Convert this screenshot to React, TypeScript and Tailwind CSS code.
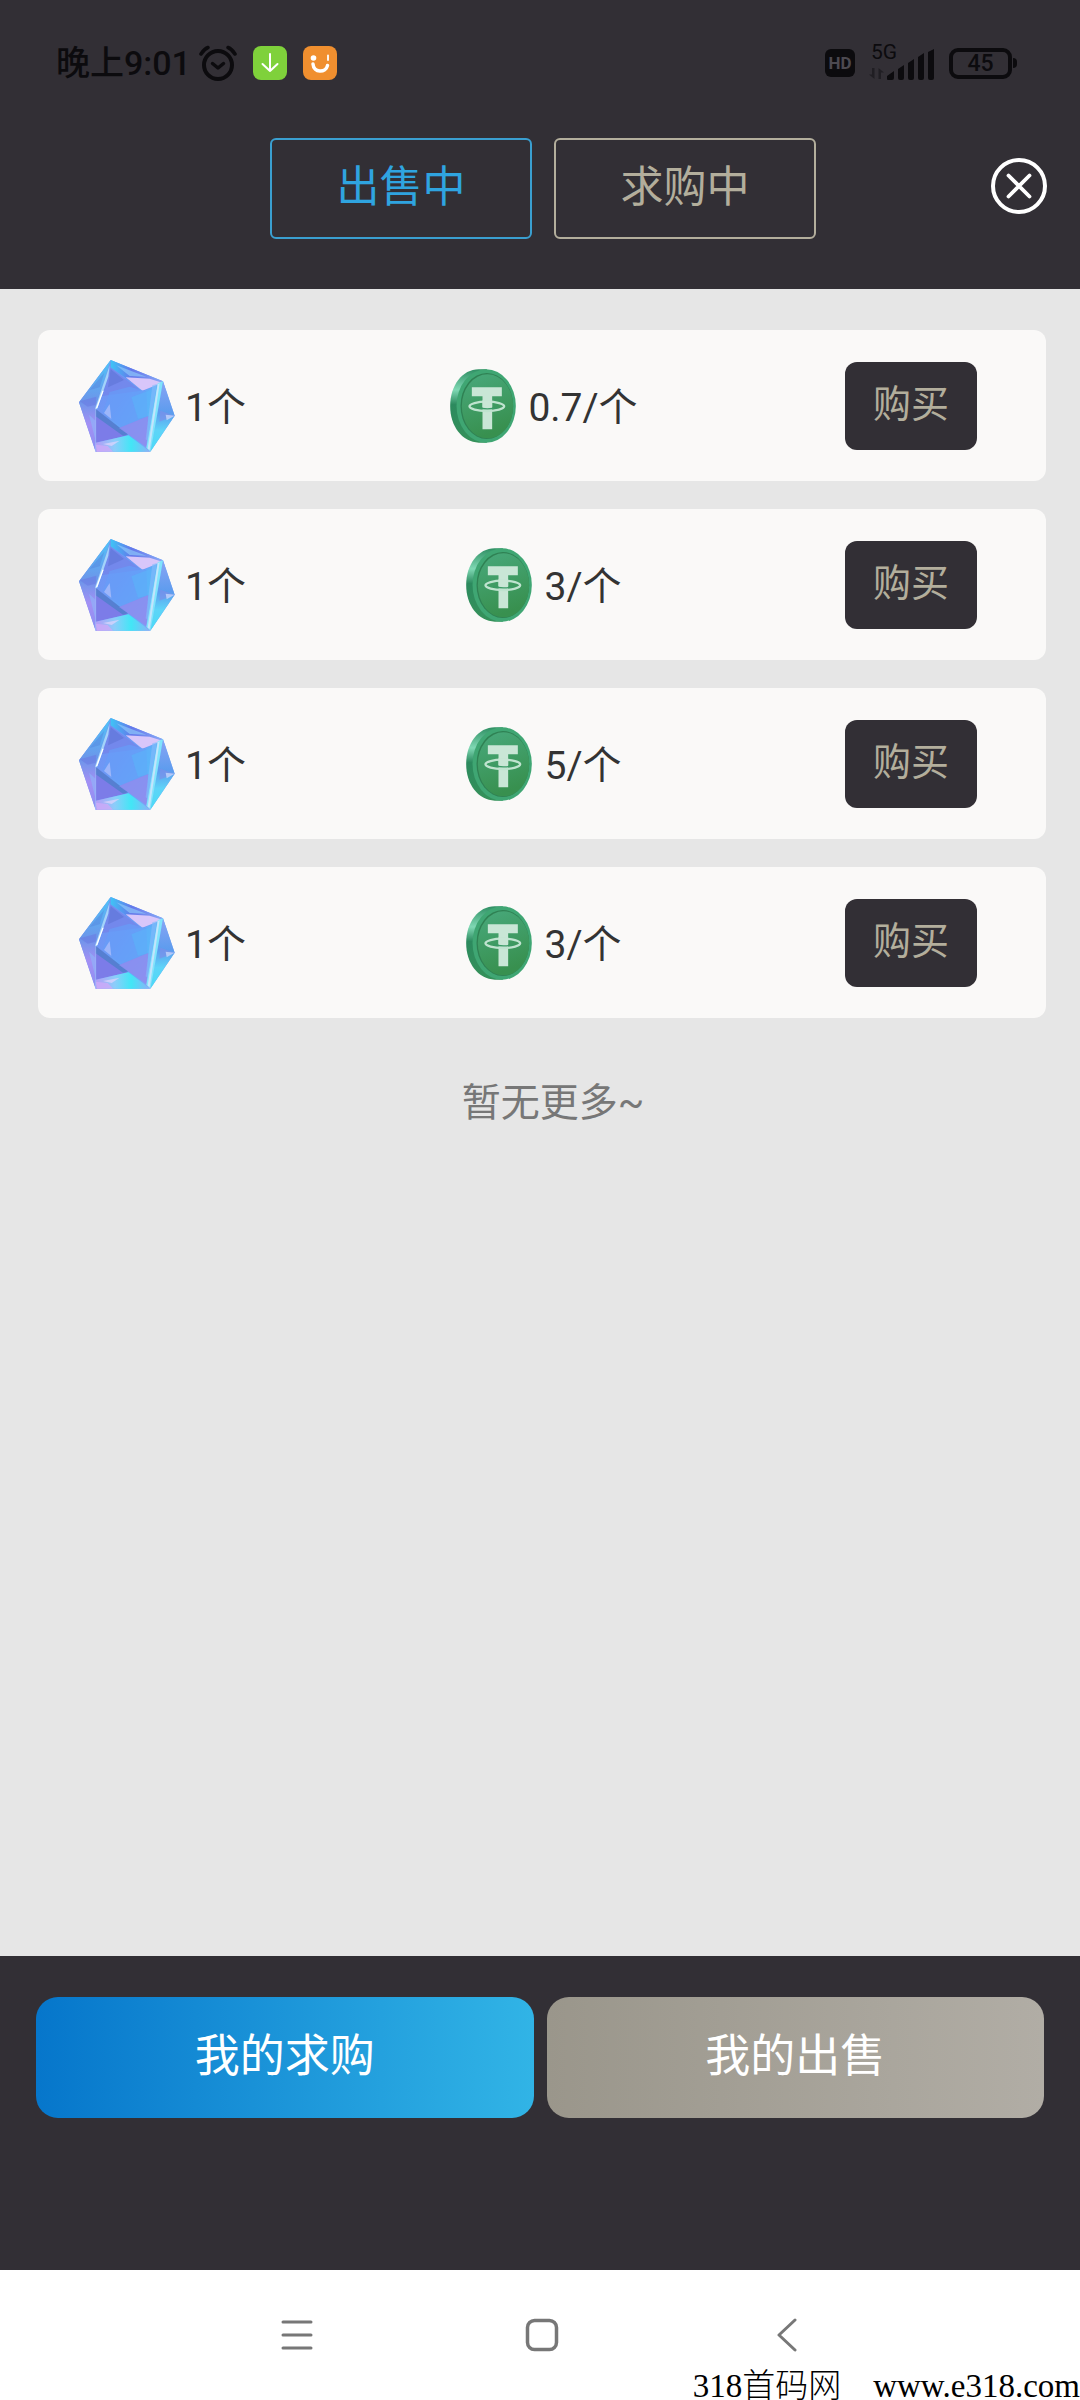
import React, { useState } from 'react';
import clsx from 'clsx';

const orders = [
    { id: 1, amount: 1, price: '0.7' },
    { id: 2, amount: 1, price: '3' },
    { id: 3, amount: 1, price: '5' },
    { id: 4, amount: 1, price: '3' },
];

const AlarmIcon = () => (
    <svg width="38" height="36" viewBox="0 0 38 36" fill="none" stroke="currentColor" strokeLinecap="round" aria-hidden="true">
        <circle cx="19" cy="20" r="14" strokeWidth="4" />
        <path d="M13.500 18.500L19 23l5.500-4.500" strokeWidth="3.500" strokeLinejoin="round" />
        <path d="M2 9Q5 4 9 2.500M36 9Q33 4 29 2.500" strokeWidth="3.500" />
    </svg>
);

const DownloadBadge = () => (
    <svg width="34" height="34" viewBox="0 0 34 34" fill="none" aria-hidden="true">
        <rect width="34" height="34" rx="8" fill="#7fd13b" />
        <path d="M17 8v17M9.500 18l7.500 7 7.500-7" stroke="#fff" strokeWidth="2" strokeLinecap="round" strokeLinejoin="round" />
    </svg>
);

const SmileBadge = () => (
    <svg width="34" height="34" viewBox="0 0 34 34" fill="none" aria-hidden="true">
        <rect width="34" height="34" rx="8" fill="#f08f2f" />
        <circle cx="10.500" cy="12" r="2.800" fill="#fff" />
        <path d="M25 9.500v4.500" stroke="#fff" strokeWidth="1.800" strokeLinecap="round" />
        <path d="M10 18c.5 9 13 9 14.500 1.500" stroke="#fff" strokeWidth="3.500" strokeLinecap="round" />
    </svg>
);

const SignalIcon = () => (
    <svg width="66" height="34" viewBox="0 0 66 34" fill="currentColor" aria-hidden="true">
        <path d="M5.500 22v11L0 28.500h3V22zM9.500 33V22l5.500 4.500h-3V33z" opacity="0.450" />
        <path d="M18 30l7-5v7a2 2 0 0 1-2 2h-4a1 1 0 0 1-1-1zM29 23l6-4v13a2 2 0 0 1-2 2h-2a2 2 0 0 1-2-2zM39 17l6-4v19a2 2 0 0 1-2 2h-2a2 2 0 0 1-2-2zM49 11l6-4v25a2 2 0 0 1-2 2h-2a2 2 0 0 1-2-2zM59 6l6-3v29a2 2 0 0 1-2 2h-2a2 2 0 0 1-2-2z" />
    </svg>
);

const CloseIcon = () => (
    <svg width="56" height="56" viewBox="0 0 56 56" fill="none" stroke="currentColor" strokeLinecap="round" aria-hidden="true">
        <circle cx="28" cy="28" r="26" strokeWidth="4" />
        <path d="M17.500 17.500l21 21M38.500 17.500l-21 21" strokeWidth="3.800" />
    </svg>
);

const GemIcon = () => (
    <svg width="96" height="92" viewBox="28 28 288 276" className="shrink-0" aria-hidden="true">
        <defs>
            <linearGradient id="gem-core" x1="0" y1="0" x2="1" y2="0.600">
                <stop offset="0" stopColor="#7a8cf0" />
                <stop offset="0.500" stopColor="#6c9af6" />
                <stop offset="0.800" stopColor="#5cb4fa" />
                <stop offset="1" stopColor="#8a9cf4" />
            </linearGradient>
            <linearGradient id="gem-left" x1="0" y1="0" x2="0" y2="1">
                <stop offset="0" stopColor="#4fc4f8" />
                <stop offset="0.450" stopColor="#6c96ea" />
                <stop offset="0.700" stopColor="#a490f4" />
                <stop offset="1" stopColor="#8a90f2" />
            </linearGradient>
            <linearGradient id="gem-right" x1="0" y1="0" x2="0" y2="1">
                <stop offset="0" stopColor="#8aa4f4" />
                <stop offset="0.450" stopColor="#5c9cee" />
                <stop offset="0.700" stopColor="#5ed4f8" />
                <stop offset="1" stopColor="#48dcf6" />
            </linearGradient>
            <linearGradient id="gem-bottom" x1="0" y1="0" x2="1" y2="0">
                <stop offset="0" stopColor="#b49cf6" />
                <stop offset="0.350" stopColor="#8ccdfa" />
                <stop offset="0.650" stopColor="#42e6f6" />
                <stop offset="1" stopColor="#8fb0f6" />
            </linearGradient>
            <linearGradient id="gem-top" x1="0" y1="0" x2="1" y2="0">
                <stop offset="0" stopColor="#3fc4f6" />
                <stop offset="0.400" stopColor="#6478ea" />
                <stop offset="1" stopColor="#8aa8f6" />
            </linearGradient>
        </defs>
        <path d="M123 28L280 92 315 195 242 303H78L28 155z" fill="url(#gem-core)" />
        <path d="M123 28L78 175 78 303 28 155z" fill="url(#gem-left)" />
        <path d="M30 152l50-14-2 24-24 6z" fill="#6a7ce2" opacity="0.600" />
        <path d="M60 118l44-52-14 44z" fill="#5588e0" opacity="0.500" />
        <path d="M58 192l20 18v60z" fill="#8cb8fa" opacity="0.600" />
        <path d="M123 28L280 92 222 120 123 50z" fill="url(#gem-top)" />
        <path d="M140 44l90 34-50-2z" fill="#8cc4fa" opacity="0.700" />
        <path d="M168 80l72 4 38 12-60 24z" fill="#d8c6fa" />
        <path d="M123 52l92 68-118 16z" fill="#7484ea" opacity="0.800" />
        <path d="M123 56l40 32-48 22z" fill="#5a70d2" opacity="0.500" />
        <path d="M120 124l60-16 50 14 4 76-78 34-56-48z" fill="#669cf8" opacity="0.700" />
        <path d="M185 140l62-24-6 80-36 8z" fill="#58b8fa" opacity="0.500" />
        <path d="M120 160l5 45-22-18z" fill="#b4c2fb" opacity="0.700" />
        <path d="M78 175L176 254 78 276z" fill="#7c7ce8" />
        <path d="M78 175l98 76-16 4-82-58z" fill="#4c80ca" opacity="0.800" />
        <path d="M148 232l88-36-6 94z" fill="#9488ee" opacity="0.800" />
        <path d="M78 276l98-22 66 49H78z" fill="url(#gem-bottom)" />
        <path d="M78 282l36 4 16 17H82z" fill="#cdaaf8" opacity="0.800" />
        <path d="M100 280l50-10-24 16z" fill="#e2d4fc" opacity="0.700" />
        <path d="M280 92L315 195 242 303z" fill="url(#gem-right)" />
        <path d="M272 180l43 15-46 18z" fill="#7c90ea" opacity="0.700" />
        <path d="M288 192l27 3-24 14z" fill="#c4d4fb" opacity="0.800" />
        <path d="M264 98l16-6-30 170-8 41-12-12z" fill="#80e4fb" />
        <path d="M264 100l6-2-30 200-6-4z" fill="#d4e4fd" opacity="0.800" />
        <path d="M248 104l14-4-28 170-6-4z" fill="#84bcfa" opacity="0.600" />
        <path d="M120 44l-4 34-34 98-6-2z" fill="#a8dafb" opacity="0.900" />
        <path d="M98 120l4 0-18 50-6 4z" fill="#fff" />
        <path d="M78 175v128" stroke="#a4c0fa" strokeWidth="2" />
    </svg>
);

const TetherIcon = () => (
    <svg width="66" height="74" viewBox="30 56 197 222" className="shrink-0" aria-hidden="true">
        <defs>
            <linearGradient id="coin-edge" x1="0" y1="0" x2="0" y2="1">
                <stop offset="0" stopColor="#2f8f63" />
                <stop offset="0.280" stopColor="#7fd8b4" />
                <stop offset="0.480" stopColor="#2c8a5e" />
                <stop offset="1" stopColor="#35915a" />
            </linearGradient>
            <linearGradient id="coin-face" x1="0" y1="0" x2="0.300" y2="1">
                <stop offset="0" stopColor="#48a97c" />
                <stop offset="1" stopColor="#38904f" />
            </linearGradient>
        </defs>
        <path d="M140 57h-24C66 57 30 106 30 167s36 108 86 110h24z" fill="url(#coin-edge)" />
        <ellipse cx="138" cy="167" rx="89" ry="110" fill="#3fa673" />
        <ellipse cx="140" cy="167" rx="79" ry="99" fill="#2f8153" />
        <ellipse cx="142" cy="168" rx="77" ry="96" fill="url(#coin-face)" />
        <path d="M95 111h90v27h-29v99h-29v-99H95z" fill="#c9e6d6" />
        <ellipse cx="140" cy="168" rx="52" ry="14" fill="none" stroke="#bfe3cf" strokeWidth="7" />
        <path d="M127 150h29v20h-29z" fill="#c9e6d6" />
        <path d="M112 172q29 7 60 0" fill="none" stroke="#3a9a66" strokeWidth="4" />
    </svg>
);

const StatusBar = () => (
    <div className="flex h-[126px] items-center justify-between pl-14 pr-[63px] text-[#0c0b0e]">
        <div className="flex items-center">
            <span className="mr-2 text-[34px] leading-10 font-medium">晚上9:01</span>
            <AlarmIcon />
            <div className="ml-4 flex gap-4">
                <DownloadBadge />
                <SmileBadge />
            </div>
        </div>
        <div className="flex items-center">
            <span className="mr-3.5 flex h-7 w-[30px] items-center justify-center rounded-md bg-[#0c0b0e] text-[17px] leading-none font-bold text-[#4c4950]">
                HD
            </span>
            <div className="relative mr-3.5">
                <SignalIcon />
                <span className="absolute -top-1.5 left-0.5 text-[21px] leading-6">5G</span>
            </div>
            <div className="flex h-[31px] w-[63px] items-center justify-center rounded-[9px] border-4 border-[#0c0b0e] text-[23px] leading-none font-medium">
                45
            </div>
            <span className="ml-px h-2.5 w-1 rounded-r-md bg-[#0c0b0e]" />
        </div>
    </div>
);

const OrderCard = ({ amount, price }: { amount: number; price: string }) => (
    <li className="grid h-[151px] grid-cols-3 items-center rounded-xl bg-[#faf9f8] text-[39px] leading-none text-[#333]">
        <div className="flex items-center gap-2.5 pl-[41px]">
            <GemIcon />
            <span className="pt-1.5">{amount}个</span>
        </div>
        <div className="flex items-center justify-center gap-3 pl-1">
            <TetherIcon />
            <span className="pt-1.5">{price}/个</span>
        </div>
        <div className="flex justify-end pr-[69px]">
            <button className="h-[88px] w-[132px] rounded-xl bg-[#322f35] pb-1 text-[38px] leading-none text-[#b3ae9c]">
                购买
            </button>
        </div>
    </li>
);

const tabs = ['出售中', '求购中'];

const App = () => {
    const [tab, setTab] = useState('出售中');

    return (
        <div className="flex min-h-screen flex-col bg-[#e6e6e6] font-['Roboto','Noto_Sans_CJK_SC',sans-serif]">
            <header className="bg-[#322f35]">
                <StatusBar />
                <div className="grid grid-cols-[1fr_auto_1fr] items-center pt-3 pb-[50px] pl-1.5">
                    <div className="col-start-2 flex gap-[22px]">
                        {tabs.map((name) => (
                            <button
                                key={name}
                                onClick={() => setTab(name)}
                                className={clsx(
                                    'h-[101px] w-[262px] rounded-md border-2 pb-0.5 text-[43px] leading-none',
                                    tab === name ? 'border-[#3a9fd0] text-[#2fa4e0]' : 'border-[#b3ae9c] text-[#b3ae9c]'
                                )}
                            >
                                {name}
                            </button>
                        ))}
                    </div>
                    <button aria-label="关闭" className="mr-[33px] mb-1.5 justify-self-end text-white">
                        <CloseIcon />
                    </button>
                </div>
            </header>

            <main className="flex-1 pt-[41px] pr-[34px] pl-[38px]">
                <ul className="flex flex-col gap-7">
                    {orders.map((order) => (
                        <OrderCard key={order.id} amount={order.amount} price={order.price} />
                    ))}
                </ul>
                <p className="mt-[60px] pl-[22px] text-center text-[39px] leading-[50px] text-[#777]">暂无更多~</p>
            </main>

            <footer>
                <div className="flex gap-[13px] bg-[#322f35] px-9 pt-[41px] pb-[152px] text-[45px] leading-none text-white">
                    <button className="h-[121px] flex-1 rounded-[22px] bg-linear-to-r from-[#0676cb] to-[#31b4e6] pb-0.5">
                        我的求购
                    </button>
                    <button className="h-[121px] flex-1 rounded-[22px] bg-linear-to-r from-[#9a968b] to-[#b1ada5] pb-0.5">
                        我的出售
                    </button>
                </div>
                <div className="relative h-[130px] bg-white text-[#777]">
                    <nav className="flex h-full items-center justify-center gap-[212px] pl-1">
                        <button aria-label="菜单">
                            <svg width="32" height="34" viewBox="0 0 32 34" stroke="currentColor" strokeWidth="3" strokeLinecap="round" aria-hidden="true">
                                <path d="M2 4h28M2 17h28M2 30h28" />
                            </svg>
                        </button>
                        <button aria-label="主页">
                            <svg width="34" height="34" viewBox="0 0 34 34" fill="none" stroke="currentColor" strokeWidth="3.500" aria-hidden="true">
                                <rect x="2.500" y="2.500" width="29" height="29" rx="7" />
                            </svg>
                        </button>
                        <button aria-label="返回">
                            <svg width="32" height="34" viewBox="0 0 32 34" fill="none" stroke="currentColor" strokeWidth="3" strokeLinecap="round" strokeLinejoin="round" aria-hidden="true">
                                <path d="M24 2L8 17l16 15" />
                            </svg>
                        </button>
                    </nav>
                    <p className="absolute right-0 bottom-0 flex gap-8 font-['Liberation_Serif','Noto_Sans_CJK_SC',serif] text-[33px] leading-7 font-light text-black">
                        <span>318首码网</span>
                        <span>www.e318.com</span>
                    </p>
                </div>
            </footer>
        </div>
    );
};

export default App;
